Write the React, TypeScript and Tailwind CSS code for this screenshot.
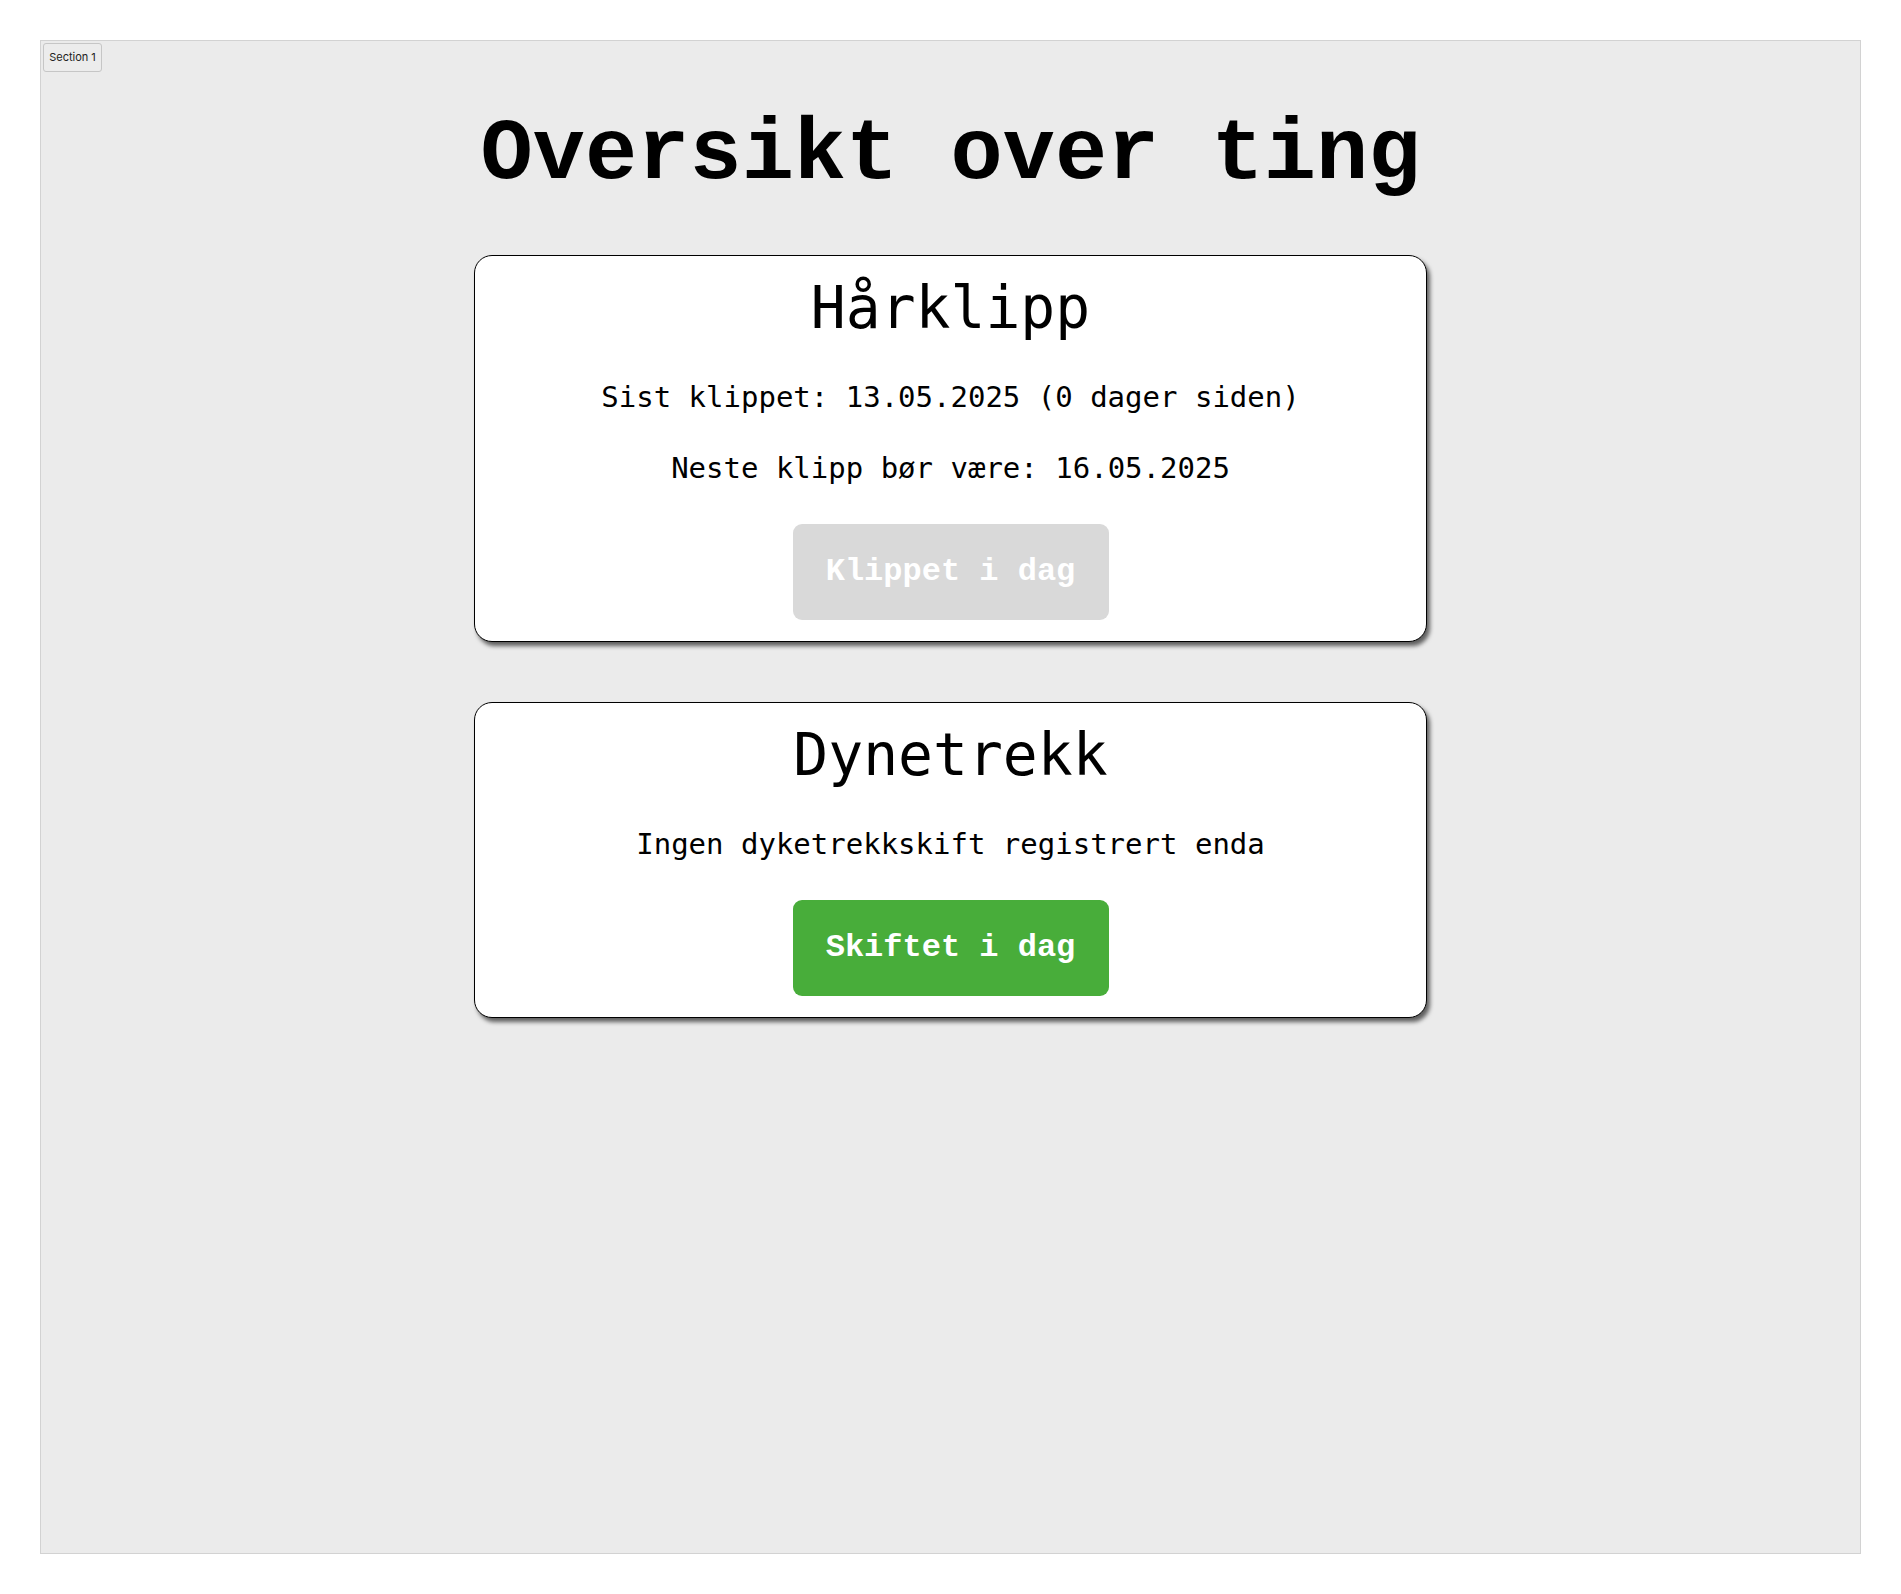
import React from 'react'

const mono = { fontFamily: '"DejaVu Sans Mono", "Liberation Mono", monospace' }

function Card({
  title,
  lines,
  label,
  disabled,
}: {
  title: string
  lines: string[]
  label: string
  disabled?: boolean
}) {
  return (
    <div className="w-[953px] bg-white border border-black rounded-[18px] shadow-[3px_4px_4px_rgba(0,0,0,0.6)] flex flex-col items-center pt-[19px] pb-[21px] text-black">
      <h2 className="font-['DejaVu_Sans_Mono',monospace] text-[58px] leading-[66px] font-normal">{title}</h2>
      {lines.map((line, i) => (
        <p
          key={i}
          className={`font-['DejaVu_Sans_Mono',monospace] text-[29px] leading-[32px] ${i === 0 ? 'mt-10' : 'mt-[39px]'}`}
        >
          {line}
        </p>
      ))}
      <button
        disabled={disabled}
        className={
          disabled
            ? "mt-10 w-[316px] h-[96px] rounded-[9px] bg-[#d9d9d9] text-white flex items-center justify-center font-['Liberation_Mono',monospace] font-bold text-[32px]"
            : "mt-10 w-[316px] h-[96px] rounded-[9px] bg-[#48ad3a] text-white flex items-center justify-center font-['Liberation_Mono',monospace] font-bold text-[32px]"
        }
      >
        {label}
      </button>
    </div>
  )
}

export default function App() {
  return (
    <div className="min-h-[1594px] bg-white p-10">
      <div className="relative h-[1514px] bg-[#ebebeb] border border-[#d2d2d2] flex flex-col items-center pt-[64px]" style={mono}>
        <div className="absolute left-[2px] top-[2px] w-[59px] h-[29px] flex items-center justify-center bg-[#ececec] border border-[#c6c6c6] rounded-[3px] text-[11px] text-[#222] font-['Inter',sans-serif] whitespace-nowrap">
          Section 1
        </div>
        <h1 className="font-['Liberation_Mono',monospace] font-bold text-[87px] leading-[100px] text-black">
          Oversikt over ting
        </h1>
        <div className="mt-[50px] flex flex-col gap-[60px]">
          <Card
            title="Hårklipp"
            lines={['Sist klippet: 13.05.2025 (0 dager siden)', 'Neste klipp bør være: 16.05.2025']}
            label="Klippet i dag"
            disabled
          />
          <Card title="Dynetrekk" lines={['Ingen dyketrekkskift registrert enda']} label="Skiftet i dag" />
        </div>
      </div>
    </div>
  )
}
